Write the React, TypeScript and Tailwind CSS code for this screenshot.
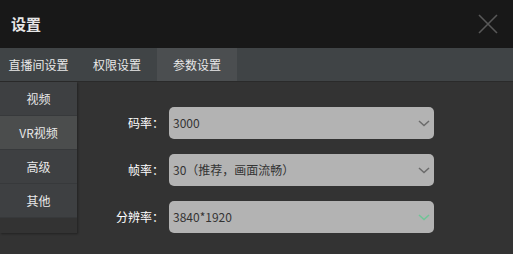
import { useState } from "react";

const FONT = { fontFamily: '"Noto Sans CJK SC", "Microsoft YaHei", sans-serif' };

const TABS = ["直播间设置", "权限设置", "参数设置"];
const SIDE = ["视频", "VR视频", "高级", "其他"];

function Chevron({ green }: { green?: boolean }) {
  return (
    <svg width="12" height="7" viewBox="0 0 12 7" className="shrink-0">
      <path d="M1 1 L6 5.5 L11 1" fill="none" stroke={green ? "#6fc596" : "#6b6b6b"} strokeWidth="1.5" />
    </svg>
  );
}

function Field({ label, value, green }: { label: string; value: string; green?: boolean }) {
  return (
    <div className="flex items-center">
      <span className="w-[92px] pr-[5px] text-right text-[12px] text-white">{label}</span>
      <div className="flex h-[32px] w-[265px] items-center justify-between rounded-[5px] bg-[#b3b3b3] px-[4px]">
        <span className="text-[12px] text-[#333]">{value}</span>
        <Chevron green={green} />
      </div>
    </div>
  );
}

export default function App() {
  const [tab, setTab] = useState(2);
  const [side, setSide] = useState(1);

  return (
    <div className="h-[254px] w-[513px] overflow-hidden bg-[#333333] select-none" style={FONT}>
      {/* header */}
      <div className="flex h-[48px] items-center justify-between bg-[#181818] pl-[11px] pr-[15px]">
        <span className="text-[15px] font-bold text-[#e6e6e6]">设置</span>
        <svg width="20" height="20" viewBox="0 0 20 20">
          <path d="M1 1 L19 19 M19 1 L1 19" stroke="#585858" strokeWidth="1.6" />
        </svg>
      </div>

      {/* tabs */}
      <div className="flex h-[34px] border-b border-[#2a2a2a] bg-[#404446]">
        {TABS.map((t, i) => (
          <button
            key={t}
            type="button"
            onClick={() => setTab(i)}
            className={`h-full text-[12px] text-[#e8e8e8] ${i === 0 ? "w-[77px]" : "w-[80px]"} ${tab === i ? "bg-[#4b4e50]" : "bg-[#404446]"}`}
          >
            {t}
          </button>
        ))}
      </div>

      <div className="flex">
        {/* side menu */}
        <div className="flex w-[77px] flex-col shadow-[1px_1px_2px_rgba(0,0,0,0.35)]">
          {SIDE.map((s, i) => (
            <button
              key={s}
              type="button"
              onClick={() => setSide(i)}
              className={`h-[34px] border-b border-[#37393b] text-[12px] text-[#e8e8e8] ${side === i ? "bg-[#4b4d4d]" : "bg-[#3e4042]"}`}
            >
              {s}
            </button>
          ))}
        </div>

        {/* form */}
        <div className="flex flex-col gap-[15px] pt-[25px]">
          <Field label="码率：" value="3000" />
          <Field label="帧率：" value="30（推荐，画面流畅）" />
          <Field label="分辨率：" value="3840*1920" green />
        </div>
      </div>
    </div>
  );
}
